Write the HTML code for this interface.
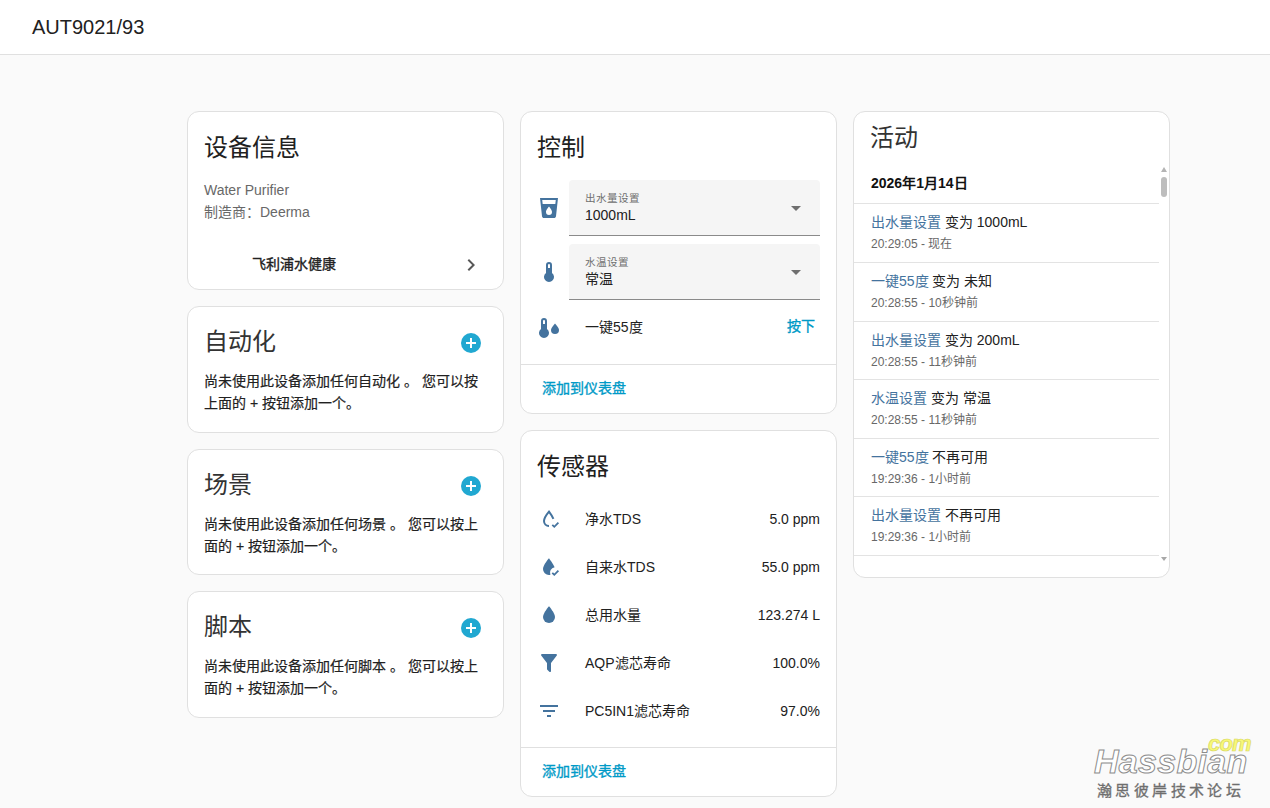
<!DOCTYPE html>
<html lang="zh-CN">
<head>
<meta charset="utf-8">
<style>
*{box-sizing:border-box;margin:0;padding:0}
html,body{width:1270px;height:808px;overflow:hidden;background:#fafafa;font-family:"Liberation Sans",sans-serif;color:#212121}
.hdr{position:absolute;left:0;top:0;width:1270px;height:55px;background:#fff;border-bottom:1px solid #e0e0e0}
.hdr .t{position:absolute;left:32px;top:15px;font-size:20px;line-height:24px;color:#212121}
.card{position:absolute;background:#fff;border:1px solid #e0e0e0;border-radius:12px;overflow:hidden}
.ttl{position:absolute;left:16px;font-size:24px;line-height:32px;color:#212121}
.abs{position:absolute;white-space:nowrap}
.grey{color:#686868}
.blue{color:#44739e}
.t2{color:#333}
.med{font-weight:500}
.link{color:#009ac7;-webkit-text-stroke:0.35px #009ac7}
.bd{-webkit-text-stroke:0.35px #212121}
.plus{position:absolute;width:20px;height:20px;border-radius:50%;background:#21a8d1}
.plus:before,.plus:after{content:"";position:absolute;background:#fff}
.plus:before{left:5px;top:9px;width:10px;height:2px}
.plus:after{left:9px;top:5px;width:2px;height:10px}
.sel{position:absolute;left:48px;width:251px;height:56px;background:#f5f5f5;border-radius:4px 4px 0 0;border-bottom:1px solid #8a8a8a}
.sel .lb{position:absolute;left:16px;top:11px;font-size:10.6px;line-height:14px;color:#6f6f6f}
.sel .v{position:absolute;left:16px;top:25px;font-size:14px;line-height:20px;color:#212121}
.sel .ar{position:absolute;left:222px;top:26px;width:0;height:0;border-left:5px solid transparent;border-right:5px solid transparent;border-top:5px solid #6f6f6f}
.div{position:absolute;left:0;right:0;height:1px;background:#e0e0e0}
svg.ic{position:absolute;fill:#44739e}
</style>
</head>
<body>
<div class="hdr"><div class="t">AUT9021/93</div></div>

<!-- column 1 -->
<div class="card" style="left:187px;top:111px;width:317px;height:179px">
  <div class="ttl" style="top:20px">设备信息</div>
  <div class="abs grey" style="left:16px;top:68px;font-size:14px;line-height:20px">Water Purifier</div>
  <div class="abs grey" style="left:16px;top:90px;font-size:14px;line-height:20px">制造商：Deerma</div>
  <div class="abs bd" style="left:64px;top:142px;font-size:14px;line-height:20px">飞利浦水健康</div>
  <svg class="ic" style="left:271px;top:141px;fill:#585858" width="24" height="24" viewBox="0 0 24 24"><path d="M8.59,16.58L13.17,12L8.59,7.41L10,6L16,12L10,18L8.59,16.58Z"/></svg>
</div>

<div class="card" style="left:187px;top:306px;width:317px;height:127px">
  <div class="ttl t2" style="top:19px">自动化</div>
  <div class="plus" style="left:273px;top:26px"></div>
  <div class="abs" style="left:16px;top:63px;font-size:14px;line-height:22px;white-space:normal;width:285px;-webkit-text-stroke:0.2px #212121">尚未使用此设备添加任何自动化 。 您可以按上面的 + 按钮添加一个。</div>
</div>

<div class="card" style="left:187px;top:449px;width:317px;height:126px">
  <div class="ttl t2" style="top:19px">场景</div>
  <div class="plus" style="left:273px;top:26px"></div>
  <div class="abs" style="left:16px;top:63px;font-size:14px;line-height:22px;white-space:normal;width:285px;-webkit-text-stroke:0.2px #212121">尚未使用此设备添加任何场景 。 您可以按上面的 + 按钮添加一个。</div>
</div>

<div class="card" style="left:187px;top:591px;width:317px;height:127px">
  <div class="ttl t2" style="top:19px">脚本</div>
  <div class="plus" style="left:273px;top:26px"></div>
  <div class="abs" style="left:16px;top:63px;font-size:14px;line-height:22px;white-space:normal;width:285px;-webkit-text-stroke:0.2px #212121">尚未使用此设备添加任何脚本 。 您可以按上面的 + 按钮添加一个。</div>
</div>

<!-- column 2 -->
<div class="card" style="left:520px;top:111px;width:317px;height:303px">
  <div class="ttl" style="top:20px">控制</div>
  <svg class="ic" style="left:16px;top:84px" width="24" height="24" viewBox="0 0 24 24"><path d="M18.32,8H5.67L5.23,4H18.77M12,19A3,3 0 0,1 9,16C9,14 12,10.6 12,10.6C12,10.6 15,14 15,16A3,3 0 0,1 12,19M3,2L5,20.23C5.13,21.23 5.97,22 7,22H17C18,22 18.87,21.23 19,20.23L21,2H3Z"/></svg>
  <svg class="ic" style="left:16px;top:148px" width="24" height="24" viewBox="0 0 24 24"><path d="M15 13V5A3 3 0 0 0 9 5V13A5 5 0 1 0 15 13M12 4A1 1 0 0 1 13 5V8H11V5A1 1 0 0 1 12 4Z"/></svg>
  <svg class="ic" style="left:16px;top:204px" width="24" height="24" viewBox="0 0 24 24"><path d="M10 13V5A3 3 0 0 0 4 5V13A5 5 0 1 0 10 13M7 4A1 1 0 0 1 8 5V8H6V5A1 1 0 0 1 7 4Z"/><path d="M18,7.5C18,7.5 22,11.8 22,14A4,4 0 0 1 14,14C14,11.8 18,7.5 18,7.5Z"/></svg>
  <div class="sel" style="top:68px"><div class="lb">出水量设置</div><div class="v">1000mL</div><div class="ar"></div></div>
  <div class="sel" style="top:132px"><div class="lb">水温设置</div><div class="v">常温</div><div class="ar"></div></div>
  <div class="abs" style="left:64px;top:205px;font-size:14px;line-height:20px">一键55度</div>
  <div class="abs link" style="left:266px;top:204px;font-size:14px;line-height:20px">按下</div>
  <div class="div" style="top:252px"></div>
  <div class="abs link" style="left:21px;top:266px;font-size:14px;line-height:20px">添加到仪表盘</div>
</div>

<div class="card" style="left:520px;top:430px;width:317px;height:367px">
  <div class="ttl" style="top:20px">传感器</div>
  <svg class="ic" style="left:16px;top:76px" width="24" height="24" viewBox="0 0 24 24"><path fill="none" stroke="#44739e" stroke-width="2" d="M16.4,11.8C15,8.6 12,4.6 12,4.6C12,4.6 7,10.6 7,14A5,5 0 0 0 12,19"/><path fill="none" stroke="#44739e" stroke-width="1.8" d="M15.3,17.8L17.3,19.8L21.4,15.7"/></svg>
  <svg class="ic" style="left:16px;top:124px" width="24" height="24" viewBox="0 0 24 24"><path d="M12,3.25C12,3.25 6,10 6,14A6,6 0 0 0 12,20C12.5,20 13,19.9 13.4,19.8A5.5,5.5 0 0 1 17.6,12.2C16,8.6 12,3.25 12,3.25Z"/><path fill="none" stroke="#44739e" stroke-width="1.8" d="M15.3,17.8L17.3,19.8L21.4,15.7"/></svg>
  <svg class="ic" style="left:16px;top:172px" width="24" height="24" viewBox="0 0 24 24"><path d="M12,20A6,6 0 0,1 6,14C6,10 12,3.25 12,3.25C12,3.25 18,10 18,14A6,6 0 0,1 12,20Z"/></svg>
  <svg class="ic" style="left:16px;top:220px" width="24" height="24" viewBox="0 0 24 24"><path d="M14,12V19.88C14.04,20.18 13.94,20.5 13.71,20.71C13.32,21.1 12.69,21.1 12.3,20.71L10.29,18.7C10.06,18.47 9.96,18.16 10,17.87V12H9.97L4.21,4.62C3.87,4.19 3.95,3.56 4.38,3.22C4.57,3.08 4.78,3 5,3V3H19V3C19.22,3 19.43,3.08 19.62,3.22C20.05,3.56 20.13,4.19 19.79,4.62L14.03,12H14Z"/></svg>
  <svg class="ic" style="left:16px;top:268px" width="24" height="24" viewBox="0 0 24 24"><path d="M6,13H18V11H6M3,6V8H21V6M10,18H14V16H10V18Z"/></svg>
  <div class="abs" style="left:64px;top:78px;font-size:14px;line-height:20px">净水TDS</div>
  <div class="abs" style="right:16px;top:78px;font-size:14px;line-height:20px">5.0 ppm</div>
  <div class="abs" style="left:64px;top:126px;font-size:14px;line-height:20px">自来水TDS</div>
  <div class="abs" style="right:16px;top:126px;font-size:14px;line-height:20px">55.0 ppm</div>
  <div class="abs" style="left:64px;top:174px;font-size:14px;line-height:20px">总用水量</div>
  <div class="abs" style="right:16px;top:174px;font-size:14px;line-height:20px">123.274 L</div>
  <div class="abs" style="left:64px;top:222px;font-size:14px;line-height:20px">AQP滤芯寿命</div>
  <div class="abs" style="right:16px;top:222px;font-size:14px;line-height:20px">100.0%</div>
  <div class="abs" style="left:64px;top:270px;font-size:14px;line-height:20px">PC5IN1滤芯寿命</div>
  <div class="abs" style="right:16px;top:270px;font-size:14px;line-height:20px">97.0%</div>
  <div class="div" style="top:316px"></div>
  <div class="abs link" style="left:21px;top:330px;font-size:14px;line-height:20px">添加到仪表盘</div>
</div>

<!-- column 3 -->
<div class="card" style="left:853px;top:111px;width:317px;height:467px">
  <div class="ttl t2" style="top:10px">活动</div>
  <div class="abs" style="left:17px;top:61px;font-size:14px;line-height:20px;font-weight:bold;color:#111">2026年1月14日</div>
  <div class="abs" style="left:0;top:91px;width:305px;height:1px;background:#e3e3e3"></div>
  <div class="abs" style="left:0;top:150px;width:305px;height:1px;background:#e3e3e3"></div>
  <div class="abs" style="left:0;top:209px;width:305px;height:1px;background:#e3e3e3"></div>
  <div class="abs" style="left:0;top:267px;width:305px;height:1px;background:#e3e3e3"></div>
  <div class="abs" style="left:0;top:326px;width:305px;height:1px;background:#e3e3e3"></div>
  <div class="abs" style="left:0;top:384px;width:305px;height:1px;background:#e3e3e3"></div>
  <div class="abs" style="left:0;top:443px;width:305px;height:1px;background:#e3e3e3"></div>
  <div class="abs" style="left:17px;top:100px;font-size:14px;line-height:20px"><span class="blue">出水量设置</span> 变为 1000mL</div>
  <div class="abs grey" style="left:17px;top:124px;font-size:12px;line-height:16px">20:29:05 - 现在</div>
  <div class="abs" style="left:17px;top:159px;font-size:14px;line-height:20px"><span class="blue">一键55度</span> 变为 未知</div>
  <div class="abs grey" style="left:17px;top:183px;font-size:12px;line-height:16px">20:28:55 - 10秒钟前</div>
  <div class="abs" style="left:17px;top:218px;font-size:14px;line-height:20px"><span class="blue">出水量设置</span> 变为 200mL</div>
  <div class="abs grey" style="left:17px;top:242px;font-size:12px;line-height:16px">20:28:55 - 11秒钟前</div>
  <div class="abs" style="left:17px;top:276px;font-size:14px;line-height:20px"><span class="blue">水温设置</span> 变为 常温</div>
  <div class="abs grey" style="left:17px;top:300px;font-size:12px;line-height:16px">20:28:55 - 11秒钟前</div>
  <div class="abs" style="left:17px;top:335px;font-size:14px;line-height:20px"><span class="blue">一键55度</span> 不再可用</div>
  <div class="abs grey" style="left:17px;top:359px;font-size:12px;line-height:16px">19:29:36 - 1小时前</div>
  <div class="abs" style="left:17px;top:393px;font-size:14px;line-height:20px"><span class="blue">出水量设置</span> 不再可用</div>
  <div class="abs grey" style="left:17px;top:417px;font-size:12px;line-height:16px">19:29:36 - 1小时前</div>
  <div class="abs" style="left:307px;top:55px;width:0;height:0;border-left:3.5px solid transparent;border-right:3.5px solid transparent;border-bottom:5px solid #b4b4b4"></div>
  <div class="abs" style="left:307px;top:65px;width:6px;height:20px;border-radius:3px;background:#bdbdbd"></div>
  <div class="abs" style="left:307px;top:445px;width:0;height:0;border-left:3.5px solid transparent;border-right:3.5px solid transparent;border-top:4.5px solid #a8a8a8"></div>
</div>
<!-- watermark -->
<div class="abs" style="left:1094px;top:744px;font-size:34px;line-height:34px;font-weight:bold;font-style:italic;color:#fff;-webkit-text-stroke:1px #8c8c8c;letter-spacing:0.3px">Hassbian</div>
<div class="abs" style="left:1208px;top:733px;font-size:22px;line-height:22px;font-weight:bold;font-style:italic;color:#f8f878;-webkit-text-stroke:0.7px #d8d860;letter-spacing:-0.8px">com</div>
<div class="abs" style="left:1097px;top:782px;font-size:15px;line-height:18px;color:#6e6e6e;letter-spacing:3.4px;-webkit-text-stroke:0.3px #6e6e6e">瀚思彼岸技术论坛</div>
</body>
</html>
